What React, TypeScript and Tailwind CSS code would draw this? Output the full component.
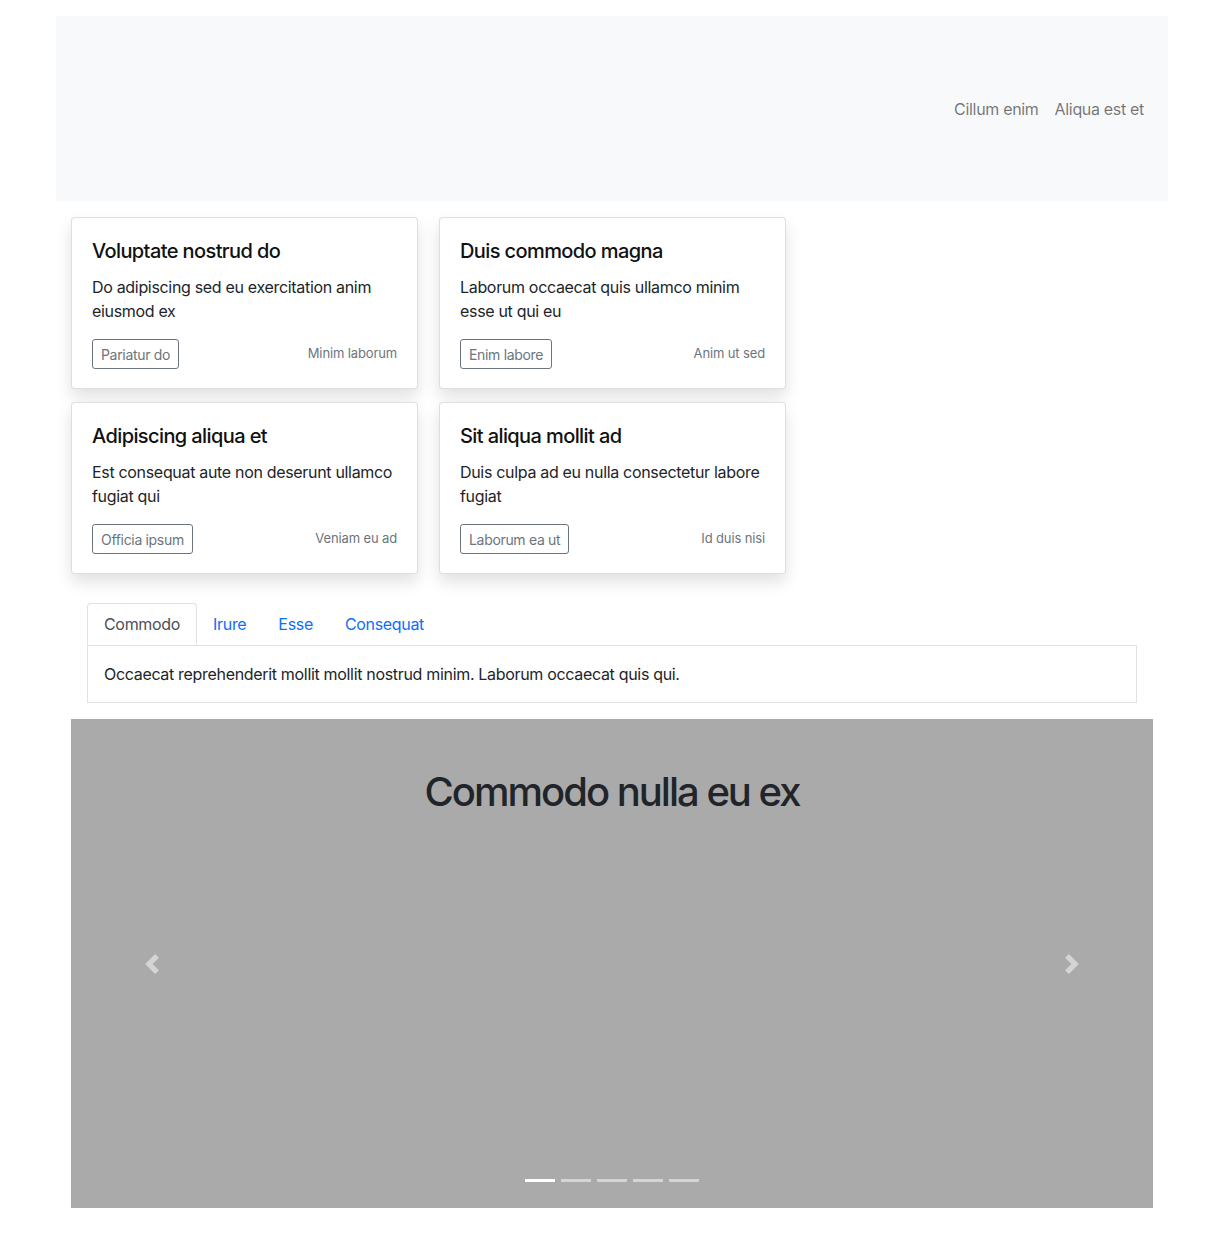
import React from "react";

const cards = [
  { t: "Voluptate nostrud do", b: "Do adipiscing sed eu exercitation anim eiusmod ex", btn: "Pariatur do", s: "Minim laborum" },
  { t: "Duis commodo magna", b: "Laborum occaecat quis ullamco minim esse ut qui eu", btn: "Enim labore", s: "Anim ut sed" },
  { t: "Adipiscing aliqua et", b: "Est consequat aute non deserunt ullamco fugiat qui", btn: "Officia ipsum", s: "Veniam eu ad" },
  { t: "Sit aliqua mollit ad", b: "Duis culpa ad eu nulla consectetur labore fugiat", btn: "Laborum ea ut", s: "Id duis nisi" },
];

export default function App() {
  return (
    <div className="bg-white min-h-[1255px] pt-4 tracking-[-0.02em]" style={{ fontFamily: "Inter, 'Noto Sans', sans-serif" }}>
      <div className="w-[1112px] ml-[56px]">
        <nav className="h-[185px] bg-[#f8f9fa] flex items-center justify-end pr-4">
          <a className="px-2 text-[16px] leading-6 text-[rgba(0,0,0,0.55)]">Cillum enim</a>
          <a className="px-2 text-[16px] leading-6 text-[rgba(0,0,0,0.55)]">Aliqua est et</a>
        </nav>
        <div className="px-[15px]">
          <div className="grid grid-cols-[347px_347px] gap-x-[21px] gap-y-[13px] mt-[16px]">
            {cards.map((c, i) => (
              <div key={i} className="bg-white border border-[rgba(0,0,0,0.125)] rounded-[4px] shadow-[0_0.5rem_1rem_rgba(0,0,0,0.12)] px-5 pt-[21px] h-[172px]">
                <h5 className="text-[20px] leading-6 font-medium tracking-[-0.03em] text-[#111] mb-3">{c.t}</h5>
                <p className="text-[16px] leading-6 text-[#212529]">{c.b}</p>
                <div className="flex items-center justify-between mt-4">
                  <button className="border border-[#6c757d] rounded-[3px] px-2 h-[30px] text-[14px] text-[#6c757d]">{c.btn}</button>
                  <span className="text-[13px] tracking-[-0.01em] text-[#6c757d]">{c.s}</span>
                </div>
              </div>
            ))}
          </div>
          <div className="mx-4 mt-[29px]">
            <div className="flex border-b border-[#dee2e6]">
              <div className="px-4 h-[42px] flex items-center text-[16px] text-[#495057] bg-white border border-[#dee2e6] border-b-white rounded-t-[4px] -mb-px">Commodo</div>
              <div className="px-4 h-[42px] flex items-center text-[16px] text-[#0d6efd]">Irure</div>
              <div className="px-4 h-[42px] flex items-center text-[16px] text-[#0d6efd]">Esse</div>
              <div className="px-4 h-[42px] flex items-center text-[16px] text-[#0d6efd]">Consequat</div>
            </div>
            <div className="border border-t-0 border-[#dee2e6] px-4 py-4 text-[16px] leading-6 text-[#212529]">
              Occaecat reprehenderit mollit mollit nostrud minim. Laborum occaecat quis qui.
            </div>
          </div>
          <div className="mt-4 h-[489px] bg-[#aaaaaa] relative flex flex-col items-center">
            <h2 className="pt-[49px] text-[40px] leading-[48px] font-medium tracking-[-0.05em] text-[#212529]">Commodo nulla eu ex</h2>
            <div className="absolute left-0 top-0 bottom-0 w-[15%] flex items-center justify-center opacity-50">
              <svg width="20" height="20" viewBox="0 0 8 8" fill="#fff">
                <path d="M5.25 0l-4 4 4 4 1.5-1.5L4.25 4l2.5-2.5L5.25 0z" />
              </svg>
            </div>
            <div className="absolute right-0 top-0 bottom-0 w-[15%] flex items-center justify-center opacity-50">
              <svg width="20" height="20" viewBox="0 0 8 8" fill="#fff">
                <path d="M2.75 0l-1.5 1.5L3.75 4l-2.5 2.5L2.75 8l4-4-4-4z" />
              </svg>
            </div>
            <div className="absolute bottom-[26px] left-0 right-0 flex justify-center gap-[6px]">
              {[0, 1, 2, 3, 4].map((i) => (
                <span key={i} className={"block w-[30px] h-[3px] bg-white " + (i === 0 ? "opacity-100" : "opacity-50")} />
              ))}
            </div>
          </div>
        </div>
      </div>
    </div>
  );
}
